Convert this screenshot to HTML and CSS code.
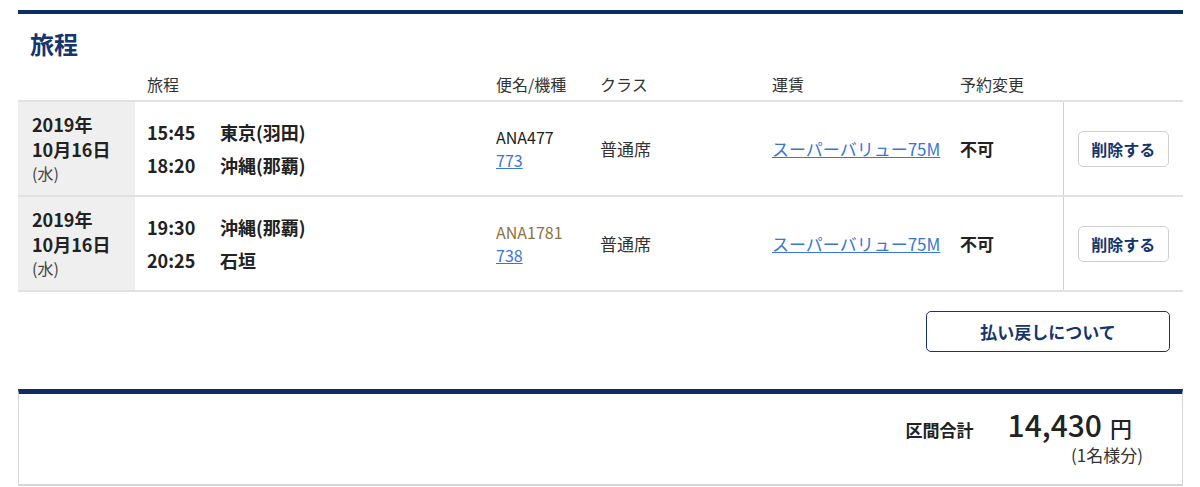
FILE: index.html
```html
<!DOCTYPE html>
<html lang="ja">
  <head>
    <meta charset="UTF-8" />
    <title>旅程</title>
    <link rel="stylesheet" href="styles.css">
  </head>
  <body>
    <div class="page">
      <section class="itinerary">
        <h2>旅程</h2>

        <table class="flights">
          <thead>
            <tr>
              <th class="col-date"></th>
              <th class="col-route">旅程</th>
              <th class="col-flight">便名/機種</th>
              <th class="col-class">クラス</th>
              <th class="col-fare">運賃</th>
              <th class="col-change">予約変更</th>
              <th class="col-action"></th>
            </tr>
          </thead>
          <tbody>
            <tr>
              <td class="date">
                <span class="ymd">2019年</span>
                <span class="ymd">10月16日</span>
                <span class="dow">(水)</span>
              </td>
              <td class="route">
                <div class="leg"><span class="time">15:45</span><span class="place">東京(羽田)</span></div>
                <div class="leg"><span class="time">18:20</span><span class="place">沖縄(那覇)</span></div>
              </td>
              <td class="flight">
                <span class="flight-no">ANA477</span>
                <a href="#">773</a>
              </td>
              <td>普通席</td>
              <td><a href="#">スーパーバリュー75M</a></td>
              <td class="change">不可</td>
              <td class="action"><button class="btn-delete">削除する</button></td>
            </tr>
            <tr>
              <td class="date">
                <span class="ymd">2019年</span>
                <span class="ymd">10月16日</span>
                <span class="dow">(水)</span>
              </td>
              <td class="route">
                <div class="leg"><span class="time">19:30</span><span class="place">沖縄(那覇)</span></div>
                <div class="leg"><span class="time">20:25</span><span class="place">石垣</span></div>
              </td>
              <td class="flight">
                <span class="flight-no codeshare">ANA1781</span>
                <a href="#">738</a>
              </td>
              <td>普通席</td>
              <td><a href="#">スーパーバリュー75M</a></td>
              <td class="change">不可</td>
              <td class="action"><button class="btn-delete">削除する</button></td>
            </tr>
          </tbody>
        </table>

        <div class="refund-row">
          <button class="btn-refund">払い戻しについて</button>
        </div>
      </section>

      <section class="total">
        <div class="total-line">
          <span class="total-label">区間合計</span>
          <span class="total-amount">14,430</span>
          <span class="total-yen">円</span>
        </div>
        <div class="total-note">(1名様分)</div>
      </section>
    </div>
  </body>
</html>
```

FILE: styles.css
```css
body {
  margin: 0;
  background: #fff;
  color: #333;
  font-family: "Noto Sans CJK JP", "Noto Sans", sans-serif;
  font-size: 17px;
}

.page {
  width: 1165px;
  margin-left: 18px;
  padding-top: 10px;
}

.itinerary {
  border-top: 4px solid #0f2d65;
}

h2 {
  margin: 14px 0 0 12px;
  font-size: 24px;
  line-height: 32px;
  font-weight: bold;
  color: #15356e;
}

.flights {
  width: 100%;
  border-collapse: collapse;
  table-layout: fixed;
}

.flights th {
  height: 35px;
  padding: 0 12px 5px;
  text-align: left;
  vertical-align: bottom;
  font-weight: normal;
  font-size: 16px;
  line-height: 22px;
  color: #333;
}

/* widths below are content widths (12px padding each side) */
.col-date { width: 93px; }
.col-route { width: 325px; }
.col-flight { width: 80px; }
.col-class { width: 148px; }
.col-fare { width: 164px; }
.col-change { width: 91px; }

.flights td {
  height: 93px;
  padding: 0 12px;
  border-top: 2px solid #e1e1e1;
  border-bottom: 2px solid #e1e1e1;
  vertical-align: middle;
  line-height: 22px;
  white-space: nowrap;
}

.flights td.date {
  background: #efefef;
  padding-left: 14px;
}

.date span {
  display: block;
}

.date .ymd {
  font-size: 18px;
  font-weight: bold;
  line-height: 25px;
  color: #222;
}

.date .dow {
  font-size: 16px;
  line-height: 23px;
  color: #444;
}

.leg {
  line-height: 33px;
  font-size: 18px;
  font-weight: bold;
  color: #222;
}

.leg .time {
  display: inline-block;
  width: 73px;
}

.flight span,
.flight a {
  display: block;
  font-size: 16px;
  line-height: 23px;
}

.flight-no {
  color: #222;
}

.flight-no.codeshare {
  color: #8a7441;
}

a {
  color: #3a75d4;
  text-decoration: underline;
}

.change {
  font-weight: bold;
  color: #222;
}

.flights td.action {
  border-left: 1px solid #d0d0d0;
  text-align: center;
  padding: 0;
}

.btn-delete {
  width: 91px;
  height: 36px;
  background: #fff;
  border: 1px solid #cfcfcf;
  border-radius: 5px;
  font-family: inherit;
  font-size: 16px;
  font-weight: bold;
  color: #15356e;
  cursor: pointer;
}

.refund-row {
  display: flex;
  justify-content: flex-end;
  padding: 19px 13px 0 0;
}

.btn-refund {
  width: 244px;
  height: 41px;
  background: #fff;
  border: 1px solid #15356e;
  border-radius: 5px;
  font-family: inherit;
  font-size: 17px;
  font-weight: bold;
  color: #15356e;
  cursor: pointer;
}

.total {
  margin-top: 37px;
  height: 90px;
  border-top: 5px solid #0f2d65;
  border-left: 1px solid #d6d6d6;
  border-right: 1px solid #d6d6d6;
  border-bottom: 2px solid #d6d6d6;
  padding: 0 39px 0 0;
  display: flex;
  flex-direction: column;
  align-items: flex-end;
}

.total-line {
  display: flex;
  align-items: baseline;
  margin-top: 10px;
  margin-right: 11px;
  color: #222;
}

.total-label {
  font-size: 17px;
  font-weight: bold;
  margin-right: 34px;
}

.total-amount {
  font-size: 30px;
  font-weight: 500;
  line-height: 40px;
}

.total-yen {
  font-size: 22px;
  font-weight: 500;
  margin-left: 8px;
}

.total-note {
  font-size: 17px;
  line-height: 22px;
  color: #333;
}
```
